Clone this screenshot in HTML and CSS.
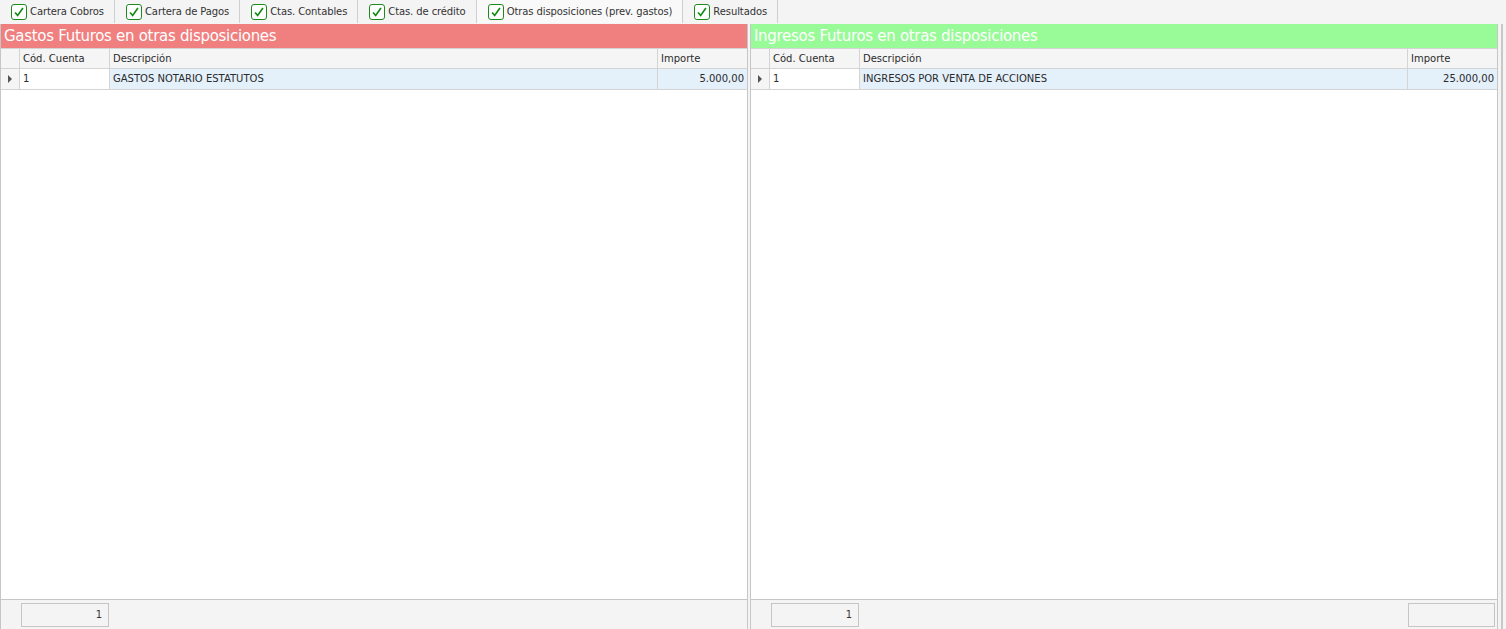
FILE: index.html
```html
<!DOCTYPE html>
<html lang="es">
<head>
  <meta charset="UTF-8">
  <title>Otras disposiciones</title>
  <link rel="stylesheet" href="styles.css">
</head>
<body>

  <div class="tabs">
    <div class="tab"><span class="check"><svg viewBox="0 0 16 16"><path d="M3.5 8.5 L6.5 12 L12.5 3.5"/></svg></span>Cartera Cobros</div>
    <div class="tab"><span class="check"><svg viewBox="0 0 16 16"><path d="M3.5 8.5 L6.5 12 L12.5 3.5"/></svg></span>Cartera de Pagos</div>
    <div class="tab"><span class="check"><svg viewBox="0 0 16 16"><path d="M3.5 8.5 L6.5 12 L12.5 3.5"/></svg></span>Ctas. Contables</div>
    <div class="tab"><span class="check"><svg viewBox="0 0 16 16"><path d="M3.5 8.5 L6.5 12 L12.5 3.5"/></svg></span>Ctas. de crédito</div>
    <div class="tab active"><span class="check"><svg viewBox="0 0 16 16"><path d="M3.5 8.5 L6.5 12 L12.5 3.5"/></svg></span>Otras disposiciones (prev. gastos)</div>
    <div class="tab"><span class="check"><svg viewBox="0 0 16 16"><path d="M3.5 8.5 L6.5 12 L12.5 3.5"/></svg></span>Resultados</div>
  </div>

  <div class="panels">
    <div class="panel">
      <div class="panel-title gastos">Gastos Futuros en otras disposiciones</div>
      <div class="grid">
        <div class="row head">
          <div class="cell ind"></div>
          <div class="cell cod">Cód. Cuenta</div>
          <div class="cell desc">Descripción</div>
          <div class="cell imp">Importe</div>
        </div>
        <div class="row data">
          <div class="cell ind"><span class="arrow"></span></div>
          <div class="cell cod focus">1</div>
          <div class="cell desc">GASTOS NOTARIO ESTATUTOS</div>
          <div class="cell imp num">5.000,00</div>
        </div>
      </div>
      <div class="footer">
        <div class="total">1</div>
      </div>
    </div>

    <div class="splitter"></div>

    <div class="panel">
      <div class="panel-title ingresos">Ingresos Futuros en otras disposiciones</div>
      <div class="grid">
        <div class="row head">
          <div class="cell ind"></div>
          <div class="cell cod">Cód. Cuenta</div>
          <div class="cell desc">Descripción</div>
          <div class="cell imp">Importe</div>
        </div>
        <div class="row data">
          <div class="cell ind"><span class="arrow"></span></div>
          <div class="cell cod focus">1</div>
          <div class="cell desc">INGRESOS POR VENTA DE ACCIONES</div>
          <div class="cell imp num">25.000,00</div>
        </div>
      </div>
      <div class="footer">
        <div class="total">1</div>
        <div class="total sum"></div>
      </div>
    </div>

    <div class="scroll-edge"></div>
  </div>

</body>
</html>
```

FILE: styles.css
```css
* {
  box-sizing: border-box;
}

body {
  margin: 0;
  background: #f4f4f4;
  color: #2b2b2b;
  font-family: 'DejaVu Sans', Tahoma, sans-serif;
  font-size: 10px;
  height: 629px;
  overflow: hidden;
}

/* tab strip */
.tabs {
  display: flex;
  height: 24px;
  border-bottom: 1px solid #f4f4f4;
}

.tab {
  display: flex;
  align-items: center;
  padding: 0 10px 0 11px;
  border-right: 1px solid #cfcfcf;
  color: #333;
  letter-spacing: -0.1px;
}

.tab.active {
  background: #f9f9f9;
  border-left: 1px solid #cfcfcf;
  margin-left: -1px;
}

.check {
  width: 16px;
  height: 16px;
  border: 1px solid #1e8a1e;
  border-radius: 3px;
  background: #fff;
  margin-right: 3px;
  display: flex;
}

.check svg {
  width: 14px;
  height: 14px;
  fill: none;
  stroke: #118a11;
  stroke-width: 1.9;
}

/* panels */
.panels {
  display: flex;
  height: 605px;
}

.panel {
  width: 748px;
  flex-shrink: 0;
  display: flex;
  flex-direction: column;
  border-left: 1px solid #c6c6c6;
  border-right: 1px solid #c6c6c6;
  background: #fff;
}

.splitter {
  width: 2px;
  flex-shrink: 0;
  background: #f4f4f4;
}

.scroll-edge {
  width: 5px;
  flex-shrink: 0;
  margin-left: 3px;
  border-left: 2px solid #c8c8c8;
  background: #f4f4f4;
}

.panel-title {
  height: 25px;
  line-height: 24px;
  padding-left: 3px;
  color: #fff;
  font-size: 15px;
  letter-spacing: -0.3px;
  border-bottom: 1px solid #d4d4d4;
}

.gastos {
  background: #f08080;
}

.ingresos {
  background: #98fb98;
}

/* grid */
.grid {
  flex: 1;
}

.row {
  display: flex;
  height: 21px;
  border-bottom: 1px solid #d4d4d4;
}

.row.head {
  height: 20px;
  background: #f5f5f5;
}

.row.data {
  background: #e4f0fa;
}

.cell {
  line-height: 19px;
  padding: 0 3px;
  border-right: 1px solid #d4d4d4;
  white-space: nowrap;
  overflow: hidden;
}

.data .cell {
  line-height: 20px;
}

.cell:last-child {
  border-right: none;
}

.ind {
  width: 19px;
  padding: 0;
  background: #f5f5f5;
  display: flex;
  align-items: center;
  justify-content: center;
}

.cod {
  width: 90px;
}

.desc {
  flex: 1;
}

.imp {
  width: 89px;
}

.num {
  text-align: right;
}

.focus {
  background: #fff;
}

.arrow {
  width: 0;
  height: 0;
  border-top: 4px solid transparent;
  border-bottom: 4px solid transparent;
  border-left: 4px solid #555;
}

/* footer */
.footer {
  height: 30px;
  border-top: 1px solid #c6c6c6;
  background: #f4f4f4;
  display: flex;
  justify-content: space-between;
  align-items: center;
  padding: 0 2px 0 20px;
}

.total {
  width: 88px;
  height: 24px;
  line-height: 22px;
  border: 1px solid #c6c6c6;
  text-align: right;
  padding-right: 6px;
  color: #333;
}

.total.sum {
  width: 87px;
}
```
